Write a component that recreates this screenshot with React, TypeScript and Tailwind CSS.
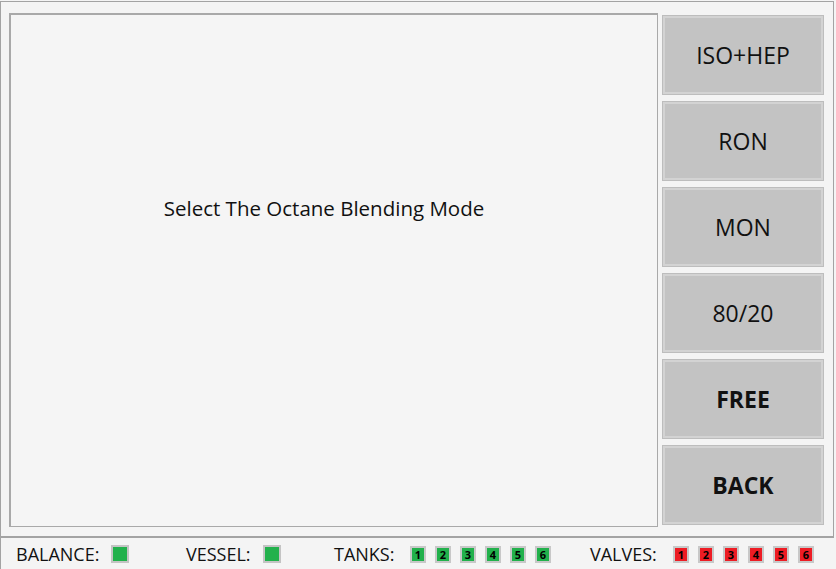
const modes = [
  { label: 'ISO+HEP', bold: false },
  { label: 'RON', bold: false },
  { label: 'MON', bold: false },
  { label: '80/20', bold: false },
  { label: 'FREE', bold: true },
  { label: 'BACK', bold: true },
];

function Lamp({ n, color }: { n?: number; color: 'green' | 'red' }) {
  const bg = color === 'green' ? 'bg-[#22b14c]' : 'bg-[#ed1c24]';
  if (n === undefined) {
    return <div className={`w-[18px] h-[18px] shrink-0 border-2 border-[#c4c4c4] ${bg}`} />;
  }
  return (
    <div
      className={`w-[16px] h-[17px] shrink-0 border-2 border-[#c8c8c8] ${bg} flex items-center justify-center text-[11px] font-bold leading-none text-black`}
    >
      {n}
    </div>
  );
}

export default function App() {
  return (
    <div
      className="w-[836px] h-[569px] bg-[#f4f4f4] flex flex-col overflow-hidden text-[#111]"
      style={{ fontFamily: '"Open Sans", "Noto Sans", sans-serif' }}
    >
      {/* main frame */}
      <div className="mt-px w-[834px] h-[537px] shrink-0 border border-[#a3a3a3] border-b-2 flex pl-2 pt-[11px] gap-[5px]">
        <div className="w-[649px] h-[514px] shrink-0 border-2 border-[#a9a9a9] border-r border-b bg-[#f5f5f5] flex flex-col items-center">
          <p className="mt-[179px] mr-[20px] text-[20.5px] leading-[28px]">Select The Octane Blending Mode</p>
        </div>
        <div className="w-[160px] shrink-0 flex flex-col gap-[8px] pt-[3px]">
          {modes.map((m) => (
            <div
              key={m.label}
              className={`h-[78px] bg-[#c3c3c3] border-2 border-[#d3d3d3] shadow-[0_0_0_1px_#bdbdbd] flex items-center justify-center text-[23px] ${m.bold ? 'font-bold' : ''}`}
            >
              {m.label}
            </div>
          ))}
        </div>
      </div>

      {/* status bar */}
      <div className="flex-1 border-l border-[#a3a3a3] flex items-center pl-[15px] text-[18px] pt-px">
        <div className="w-[170px] flex items-center">
          <span className="w-[95px]">BALANCE:</span>
          <Lamp color="green" />
        </div>
        <div className="w-[148px] flex items-center">
          <span className="w-[77px]">VESSEL:</span>
          <Lamp color="green" />
        </div>
        <div className="w-[256px] flex items-center">
          <span className="w-[76px]">TANKS:</span>
          <div className="flex gap-[9px]">
            {[1, 2, 3, 4, 5, 6].map((n) => (
              <Lamp key={n} n={n} color="green" />
            ))}
          </div>
        </div>
        <div className="flex items-center">
          <span className="w-[83px]">VALVES:</span>
          <div className="flex gap-[9px]">
            {[1, 2, 3, 4, 5, 6].map((n) => (
              <Lamp key={n} n={n} color="red" />
            ))}
          </div>
        </div>
      </div>
    </div>
  );
}
